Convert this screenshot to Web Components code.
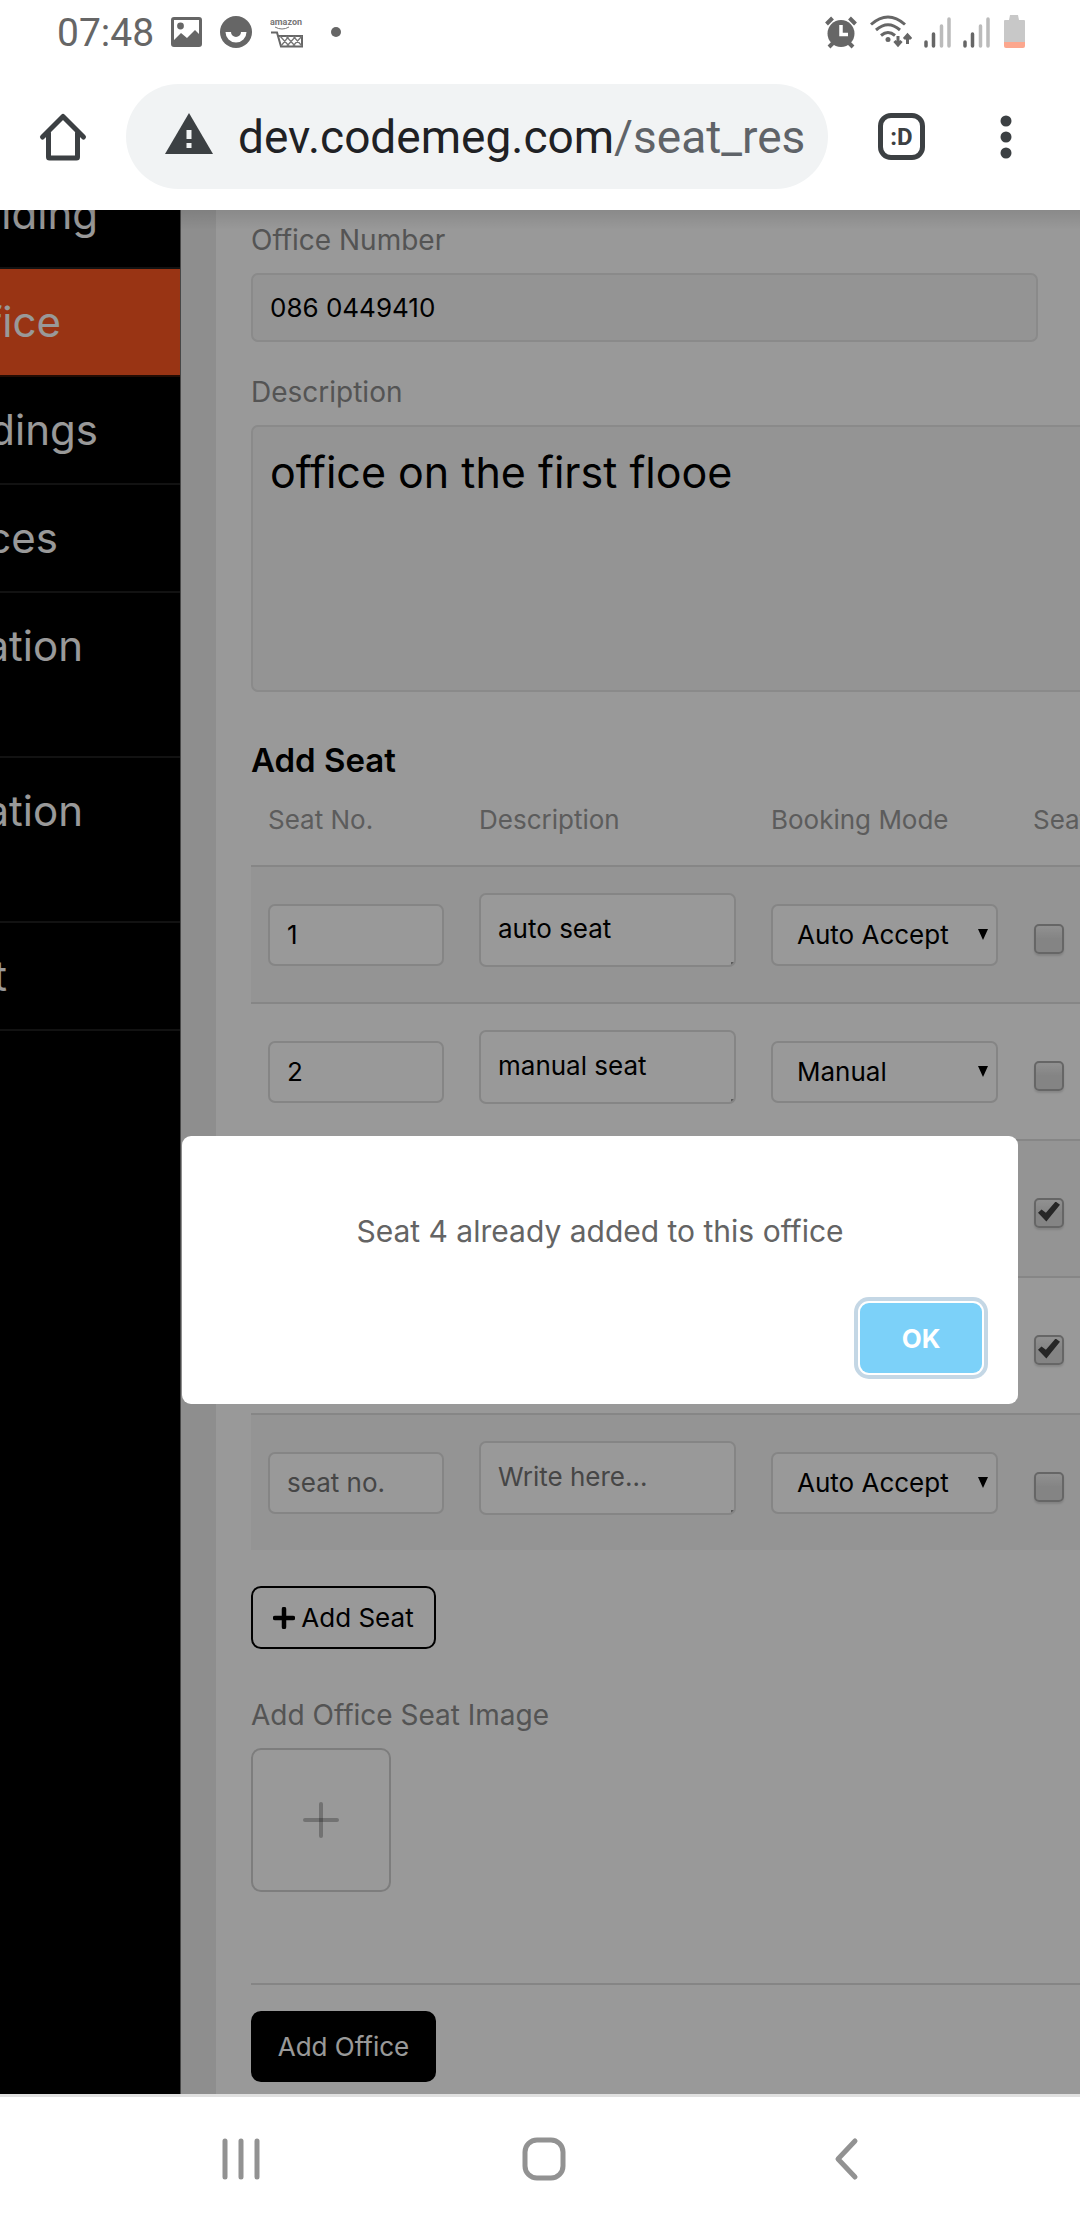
<!DOCTYPE html>
<html lang="en">
<head>
<meta charset="utf-8">
<meta name="viewport" content="width=device-width, initial-scale=1">
<title>Add Office</title>
<style>
  html, body { margin: 0; }
  body { min-height: 100vh; display: flex; flex-direction: column; background: #fff; font-family: Inter, "Open Sans", sans-serif; overflow-x: hidden; }
  app-page { flex: 1; }
</style>
</head>
<body>
<status-bar></status-bar>
<browser-bar></browser-bar>
<app-page>
  <side-nav slot="nav"></side-nav>
  <office-form></office-form>
  <alert-box slot="dialog">Seat 4 already added to this office</alert-box>
</app-page>
<system-nav></system-nav>

<script>
const define = (name, markup, setup) => customElements.define(name, class extends HTMLElement {
  constructor() {
    super();
    const root = this.attachShadow({ mode: 'open' });
    const template = document.createElement('template');
    template.innerHTML = markup;
    root.append(template.content.cloneNode(true));
  }
  connectedCallback() { if (setup && !this.ready) { this.ready = true; setup(this, this.shadowRoot); } }
});

define('status-bar', `
<style>
  :host { display: flex; justify-content: space-between; align-items: center; height: 63px; padding: 0 54px 0 57px; box-sizing: border-box; color: #666; font-family: Roboto, sans-serif; }
  div { display: flex; align-items: center; }
  time { font-size: 39px; line-height: 44px; width: 96px; padding-top: 3px; white-space: nowrap; }
  svg { display: block; flex: none; }
  .left { gap: 18px; }
  .right { gap: 12px; }
</style>
<div class="left">
  <time>07:48</time>
  <svg width="31" height="31" viewBox="0 0 31 31"><path fill="#666" fill-rule="evenodd" d="M3 1h25q3 0 3 3v24q0 3-3 3H3q-3 0-3-3V4q0-3 3-3zM3 4v20l7-7 6 5 8-8 4 4V4z"/><circle cx="9.500" cy="10" r="3.400" fill="#666"/></svg>
  <svg width="32" height="32" viewBox="0 0 32 32"><circle cx="16" cy="16" r="16" fill="#666"/><path fill="#fff" d="M5.500 16h5.500a5 5 0 0 0 10 0h5.500a10.500 10.500 0 0 1-21 0z"/></svg>
  <svg width="34" height="32" viewBox="0 0 34 32"><text x="0" y="9" font-family="Roboto, sans-serif" font-size="9" font-weight="700" fill="#777">amazon</text><path d="M5 11q7 4 14 0" fill="none" stroke="#777" stroke-width="1"/><path d="M1 16.500h6l4 14h21V20H8" fill="none" stroke="#666" stroke-width="2"/><path d="M10 20l9 10m-3-10l9 10m-2-10l9 10M32 20l-9 10m3-10l-9 10m2-10l-8 10" stroke="#777" stroke-width="1.300"/></svg>
  <svg width="32" height="12" viewBox="0 0 32 12"><circle cx="14" cy="6" r="5" fill="#666"/></svg>
</div>
<div class="right">
  <svg width="34" height="34" viewBox="0 0 34 34"><circle cx="17" cy="18.500" r="13.500" fill="#666"/><path d="M2.500 9l6-6M31.500 9l-6-6M5 32l5-5M29 32l-5-5" stroke="#666" stroke-width="4"/><path d="M17 10v9.500h7" fill="none" stroke="#fff" stroke-width="3.500"/></svg>
  <svg width="42" height="34" viewBox="0 0 42 34"><g fill="none" stroke="#666" stroke-width="3"><path d="M1 9.500q17-15 34 0M6 15q12-10.500 24 0M11 20.500q7-6 14 0"/><path d="M28 21v9m-3.500-4l3.500 4 3.500-4M37.500 29v-9m-3.500 4l3.500-4 3.500 4"/></g><circle cx="18" cy="24.500" r="2.500" fill="#666"/></svg>
  <svg width="27" height="32" viewBox="0 0 27 32"><g stroke-width="3.500" stroke-linecap="round"><path stroke="#666" d="M2 30v-4M9.500 30V18"/><path stroke="#bbb" d="M17.500 30V10M25 30V3"/></g></svg>
  <svg width="27" height="32" viewBox="0 0 27 32"><g stroke-width="3.500" stroke-linecap="round"><path stroke="#666" d="M2 30v-4M9.500 30V18"/><path stroke="#bbb" d="M17.500 30V10M25 30V3"/></g></svg>
  <svg width="24" height="34" viewBox="0 0 24 34"><path fill="#c8c8c8" d="M8 0h8l1 5h5q1 0 1 1v21H2V6q0-1 1-1h4z"/><path fill="#fca78e" d="M2 27h21v4q0 2-2 2H4q-2 0-2-2z"/></svg>
</div>`);

define('browser-bar', `
<style>
  :host { display: flex; align-items: center; height: 147px; box-sizing: border-box; font-family: Roboto, sans-serif; padding-left: 38px; }
  button { border: 0; background: none; padding: 0; margin: 0; display: grid; place-items: center; flex: none; }
  .home { width: 50px; height: 50px; }
  .url { flex: 1; min-width: 0; margin-left: 38px; height: 105px; border-radius: 53px; background: #f1f3f4; display: flex; align-items: center; padding-left: 39px; box-sizing: border-box; text-decoration: none; color: #202124; font-size: 46px; white-space: nowrap; }
  .url svg { flex: none; margin-right: 25px; }
  .path { color: #5f6368; }
  .tabs { width: 47px; height: 47px; margin-left: 50px; border: 5px solid #3c4043; border-radius: 13px; box-sizing: border-box; color: #3c4043; font: 700 24px/24px Roboto, sans-serif; }
  .menu { width: 28px; height: 50px; margin: 0 60px 0 67px; }
</style>
<button class="home" aria-label="Home"><svg width="50" height="50" viewBox="0 0 50 50"><path d="M4.500 25L25 4.500 45.500 25M10.500 21v24q0 1 1 1h27q1 0 1-1V21" fill="none" stroke="#3c4043" stroke-width="5" stroke-linecap="round" stroke-linejoin="round"/></svg></button>
<a class="url" href="#"><svg width="48" height="48" viewBox="0 0 48 48"><path fill="#3c4043" d="M24 0l24 41H0z"/><path stroke="#f1f3f4" stroke-width="5" d="M24 17v9m0 4v5"/></svg><span>dev.codemeg.com<span class="path">/seat_res</span></span></a>
<button class="tabs" aria-label="Tabs">:D</button>
<button class="menu" aria-label="Menu"><svg width="12" height="46" viewBox="0 0 12 46"><g fill="#3c4043"><circle cx="6" cy="7" r="5.500"/><circle cx="6" cy="23" r="5.500"/><circle cx="6" cy="39" r="5.500"/></g></svg></button>`);

define('app-page', `
<style>
  :host { display: flex; position: relative; overflow: hidden; background: #ededed; }
  main { flex: 1; min-width: 0; margin-left: 35px; background: #fff; display: flex; flex-direction: column; }
  .dim { position: absolute; inset: 0; background: linear-gradient(rgba(0,0,0,.1), transparent 20px), rgba(0,0,0,.4); box-sizing: border-box; padding: 236px 62px 0 182px; display: flex; align-items: center; }
</style>
<slot name="nav"></slot>
<main><slot></slot></main>
<div class="dim"><slot name="dialog"></slot></div>`);

define('side-nav', `
<style>
  :host { display: block; width: 181px; flex: none; background: #000; border-right: 1px solid #777; box-sizing: border-box; overflow: hidden; }
  nav { margin-top: -49px; display: flex; flex-direction: column; }
  a { box-sizing: border-box; height: 108px; padding-top: 24px; border-bottom: 2px solid #1e1e1e; color: #fff; font-size: 42px; line-height: 57px; text-decoration: none; display: flex; }
  a.on { background: #ff5722; border-color: #3a1408; }
  a.tall { height: 165px; }
  span { display: flex; justify-content: flex-end; flex: none; }
</style>
<nav></nav>`, (host, root) => {
  /* The drawer is scrolled sideways: each label shows only its end, up to the given x. */
  const items = [['lding', 98], ['fice', 61, 'on'], ['dings', 98], ['ces', 58], ['ation', 83, 'tall'], ['ation', 83, 'tall'], ['t', 7]];
  root.querySelector('nav').innerHTML = items.map(([t, end, c = '']) => `<a href="#" class="${c}"><span style="width:${end}px">${t}</span></a>`).join('');
});

define('form-field', `
<style>
  :host { display: flex; flex-direction: column; }
  ::slotted(label) { font-size: 28px; line-height: 32px; margin-bottom: 17px; color: #8c8c8c; }
</style>
<slot></slot>`);

define('seat-table', `
<style>
  :host { display: block; }
  table { table-layout: fixed; width: 1120px; border-spacing: 0; }
  th { text-align: left; font-weight: 400; font-size: 26px; line-height: 30px; color: #9a9a9a; padding: 25px 18px 30px; }
  td { height: 135px; padding: 0 17px 0 18px; border-top: 2px solid #e0e0e0; vertical-align: middle; }
  th:first-child, td:first-child { padding-left: 17px; }
  tr:nth-child(odd) td { background: #f7f7f7; }
  input, textarea, select { box-sizing: border-box; display: block; width: 100%; margin: 0; border: 2px solid #dedede; border-radius: 7px; background: #fff; color: #000; font: 26px/30px Inter, "Open Sans", sans-serif; }
  input { height: 62px; padding: 0 17px; }
  textarea { height: 74px; padding: 19px 17px; resize: none; overflow: hidden; background: linear-gradient(#999, #999) right bottom / 3px 3px no-repeat #fff; }
  ::placeholder { color: #757575; opacity: 1; }
  .area { padding-bottom: 10px; }
  .pick { display: grid; align-items: center; }
  .pick > * { grid-area: 1 / 1; }
  select { appearance: none; height: 62px; padding: 0 24px; }
  .pick svg { justify-self: end; margin-right: 10px; pointer-events: none; }
  input[type=checkbox] { appearance: none; width: 30px; height: 30px; padding: 0; margin: 8px 0 0 1px; border: 2px solid #aaa; border-radius: 5px; background: linear-gradient(#f2f2f2, #dcdcdc 50%); box-shadow: 0 2px 2px rgba(0,0,0,.12); }
  input:checked::before { content: ""; display: block; width: 22px; height: 20px; margin: 2px; background: #404040; clip-path: polygon(0 56%, 16% 40%, 36% 56%, 80% 0, 100% 16%, 38% 100%); }
</style>
<table>
  <colgroup><col style="width:210px"><col style="width:292px"><col style="width:262px"><col></colgroup>
  <thead><tr><th>Seat No.</th><th>Description</th><th>Booking Mode</th><th>Seat</th></tr></thead>
  <tbody></tbody>
</table>`, (host, root) => {
  const rows = [['1', 'auto seat', 'Auto Accept', false], ['2', 'manual seat', 'Manual', false], ['3', '', 'Auto Accept', true], ['4', '', 'Auto Accept', true], ['', '', 'Auto Accept', false]];
  const modes = ['Auto Accept', 'Manual'];
  root.querySelector('tbody').innerHTML = rows.map(([no, text, mode, on]) => `<tr>
    <td><input aria-label="Seat No." placeholder="seat no." value="${no}"></td>
    <td><div class="area"><textarea aria-label="Description" placeholder="Write here...">${text}</textarea></div></td>
    <td><div class="pick"><select aria-label="Booking Mode">${modes.map(m => `<option${m === mode ? ' selected' : ''}>${m}</option>`).join('')}</select><svg width="10" height="12" viewBox="0 0 10 12"><path d="M0 0h10L5 11z"/></svg></div></td>
    <td><input type="checkbox" aria-label="Seat"${on ? ' checked' : ''}></td></tr>`).join('');
});

define('office-form', `
<style>
  :host { display: block; padding: 14px 0 12px 35px; }
  form { display: flex; flex-direction: column; align-items: stretch; }
  input, textarea { box-sizing: border-box; border: 2px solid #e6e6e6; border-radius: 7px; background: #f7f7f7; color: #000; padding: 0 17px; font: 26px Inter, "Open Sans", sans-serif; }
  input { height: 69px; margin-right: 42px; }
  textarea { height: 267px; margin-right: -42px; padding: 19px 17px; font-size: 43px; line-height: 52px; resize: none; }
  .desc { margin-top: 34px; }
  h3 { margin: 48px 0 0; font-size: 33px; line-height: 40px; font-weight: 600; color: #000; }
  button { box-sizing: border-box; align-self: flex-start; width: 185px; border-radius: 10px; font: 26px Inter, "Open Sans", sans-serif; padding: 0; display: flex; align-items: center; justify-content: center; gap: 6px; white-space: nowrap; }
  .add { margin: 36px 0 50px; height: 63px; background: #fff; border: 2px solid #000; color: #000; }
  .image { width: 140px; height: 144px; background: #fff; border: 2px solid #d0d0d0; }
  .save { height: 71px; background: #000; border: 0; color: #fff; }
  hr { margin: 91px 0 26px; border: 0; height: 2px; background: #dedede; }
</style>
<form>
  <form-field><label for="number">Office Number</label><input id="number" value="086 0449410"></form-field>
  <form-field class="desc"><label for="about">Description</label><textarea id="about">office on the first flooe</textarea></form-field>
  <h3>Add Seat</h3>
  <seat-table></seat-table>
  <button class="add" type="button"><svg width="22" height="22" viewBox="0 0 22 22"><path d="M11 2v18M2 11h18" stroke="#000" stroke-width="4.500" stroke-linecap="round"/></svg>Add Seat</button>
  <form-field><label for="image">Add Office Seat Image</label><button id="image" class="image" type="button" aria-label="Add Office Seat Image"><svg width="36" height="36" viewBox="0 0 36 36"><path d="M18 2v32" stroke="#000" stroke-opacity=".25" stroke-width="4" stroke-linecap="round"/><path d="M2 18h32" stroke="#000" stroke-opacity=".25" stroke-width="4" stroke-linecap="round"/></svg></button></form-field>
  <hr>
  <button class="save" type="button">Add Office</button>
</form>`);

define('alert-box', `
<style>
  :host { flex: 1; display: flex; flex-direction: column; background: #fff; border-radius: 9px; }
  p { margin: 0; padding: 75px 20px 0; text-align: center; color: #646464; font-size: 30px; line-height: 40px; }
  button { align-self: flex-end; margin: 52px 36px 31px 0; width: 122px; height: 70px; border: 0; border-radius: 9px; background: #7cd1f9; color: #fff; font: 700 26px Inter, "Open Sans", sans-serif; box-shadow: 0 0 0 2px #fff, 0 0 0 6px #c4d7e5; }
</style>
<p role="alert"><slot></slot></p>
<button type="button">OK</button>`);

define('system-nav', `
<style>
  :host { display: flex; align-items: center; justify-content: space-around; height: 126px; box-sizing: border-box; border-top: 3px solid #e0e0e0; padding: 0 82px 0 90px; background: #fff; }
  button { border: 0; padding: 0; background: none; display: grid; place-items: center; width: 60px; height: 60px; }
  path, rect { fill: none; stroke: #929292; stroke-width: 5; stroke-linecap: round; }
</style>
<button aria-label="Recent apps"><svg width="42" height="44" viewBox="0 0 42 44"><path d="M5 4v36M21 4v36M37 4v36"/></svg></button>
<button aria-label="Home"><svg width="44" height="44" viewBox="0 0 44 44"><rect x="3" y="3" width="38" height="38" rx="12"/></svg></button>
<button aria-label="Back"><svg width="44" height="44" viewBox="0 0 44 44"><path d="M30 4L13 22l17 18" stroke-linejoin="round"/></svg></button>`);
</script>
</body>
</html>
